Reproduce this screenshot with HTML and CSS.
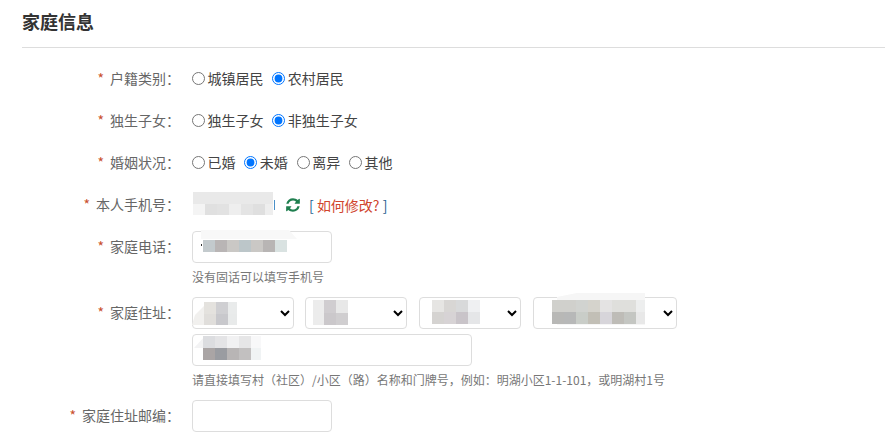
FILE: index.html
```html
<!DOCTYPE html>
<html lang="zh-CN">
<head>
<meta charset="utf-8">
<title>家庭信息</title>
<link rel="stylesheet" href="styles.css">
</head>
<body>
<section class="section">
  <h2 class="section-title">家庭信息</h2>
  <form class="form">
    <div class="row">
      <div class="label"><span class="req">*</span>户籍类别：</div>
      <div class="radios">
        <label class="radio"><input type="radio" name="a">城镇居民</label>
        <label class="radio"><input type="radio" name="a" checked>农村居民</label>
      </div>
    </div>
    <div class="row">
      <div class="label"><span class="req">*</span>独生子女：</div>
      <div class="radios">
        <label class="radio"><input type="radio" name="b">独生子女</label>
        <label class="radio"><input type="radio" name="b" checked>非独生子女</label>
      </div>
    </div>
    <div class="row">
      <div class="label"><span class="req">*</span>婚姻状况：</div>
      <div class="radios">
        <label class="radio"><input type="radio" name="c">已婚</label>
        <label class="radio"><input type="radio" name="c" checked>未婚</label>
        <label class="radio"><input type="radio" name="c">离异</label>
        <label class="radio"><input type="radio" name="c">其他</label>
      </div>
    </div>
    <div class="row">
      <div class="label"><span class="req">*</span>本人手机号：</div>
      <div class="phone">
        <div class="phone-value">
          <svg class="mosaic" aria-hidden="true">
            <rect x="1" y="-5" width="80" height="12" fill="#e9e9e9"/>
            <rect x="1" y="7" width="12" height="11" fill="#f4f4f4"/>
            <rect x="13" y="7" width="12" height="11" fill="#e0e0e0"/>
            <rect x="25" y="7" width="12" height="11" fill="#e2e2e2"/>
            <rect x="37" y="7" width="12" height="11" fill="#eeeeee"/>
            <rect x="49" y="7" width="12" height="11" fill="#e4e4e4"/>
            <rect x="61" y="7" width="12" height="11" fill="#dfdfdf"/>
            <rect x="73" y="7" width="8" height="11" fill="#eeeeee"/>
            <rect x="82" y="3" width="1" height="10" fill="#4a90c8"/>
          </svg>
        </div>
        <svg class="refresh" viewBox="0 0 1792 1792" aria-hidden="true"><path d="M1639 1056q0 5-1 7-64 268-268 434.500t-478 166.500q-146 0-282.500-55t-243.500-157l-129 129q-19 19-45 19t-45-19-19-45v-448q0-26 19-45t45-19h448q26 0 45 19t19 45-19 45l-137 137q71 66 161 102t187 36q134 0 250-65t186-179q11-17 53-117 8-23 30-23h192q13 0 22.500 9.500t9.500 22.500zm25-800v448q0 26-19 45t-45 19h-448q-26 0-45-19t-19-45 19-45l138-138q-148-137-349-137-134 0-250 65t-186 179q-11 17-53 117-8 23-30 23h-199q-13 0-22.500-9.500t-9.500-22.500v-7q65-268 270-434.500t480-166.500q146 0 284 55.500t245 156.500l130-129q19-19 45-19t45 19 19 45z"/></svg>
        <span class="how">[ <a class="how-link">如何修改?</a> ]</span>
      </div>
    </div>
    <div class="row">
      <div class="label"><span class="req">*</span>家庭电话：</div>
      <div class="field">
        <div class="overlay-wrap short">
          <input class="input" type="text">
          <svg class="mosaic" aria-hidden="true">
            <path d="M9 -1h88l8 9h-96z" fill="#f8f8f8"/>
            <rect x="11" y="9" width="12" height="12" fill="#c3cacd"/>
            <rect x="23" y="9" width="12" height="12" fill="#b9b5b5"/>
            <rect x="35" y="9" width="12" height="12" fill="#cac8c5"/>
            <rect x="47" y="9" width="12" height="12" fill="#bcc6c9"/>
            <rect x="59" y="9" width="12" height="12" fill="#cac8c5"/>
            <rect x="71" y="9" width="12" height="12" fill="#b8b5b4"/>
            <rect x="83" y="9" width="12" height="12" fill="#d9e2e1"/>
            <rect x="9" y="13" width="1" height="2" fill="#333333"/>
          </svg>
        </div>
        <p class="hint">没有固话可以填写手机号</p>
      </div>
    </div>
    <div class="row">
      <div class="label"><span class="req">*</span>家庭住址：</div>
      <div class="field">
        <div class="selects">
          <div class="overlay-wrap sel-a">
            <select class="select"><option></option></select>
            <svg class="mosaic" aria-hidden="true">
              <path d="M3 18l13-13h8v23h-24z" fill="#f1f0ee"/>
              <rect x="12" y="5" width="12" height="12" fill="#e4e2de"/>
              <rect x="24" y="5" width="12" height="12" fill="#cfcfd2"/>
              <rect x="36" y="5" width="9" height="12" fill="#e9ebeb"/>
              <rect x="12" y="17" width="12" height="11" fill="#e0dedb"/>
              <rect x="24" y="17" width="12" height="11" fill="#c8c8cc"/>
              <rect x="36" y="17" width="9" height="11" fill="#e8eaea"/>
            </svg>
          </div>
          <div class="overlay-wrap sel-a">
            <select class="select"><option></option></select>
            <svg class="mosaic" aria-hidden="true">
              <rect x="8" y="3" width="11" height="25" fill="#ececec"/>
              <rect x="19" y="3" width="12" height="13" fill="#d0cdd0"/>
              <rect x="31" y="3" width="12" height="13" fill="#e8e8e8"/>
              <rect x="19" y="16" width="12" height="12" fill="#cbc8cb"/>
              <rect x="31" y="16" width="12" height="12" fill="#d0ced0"/>
            </svg>
          </div>
          <div class="overlay-wrap sel-a sel-c">
            <select class="select"><option></option></select>
            <svg class="mosaic" aria-hidden="true">
              <rect x="13" y="3" width="12" height="12" fill="#e6e5e3"/>
              <rect x="25" y="3" width="12" height="12" fill="#d8d6d4"/>
              <rect x="37" y="3" width="12" height="12" fill="#d8d9da"/>
              <rect x="49" y="3" width="12" height="12" fill="#eff0f2"/>
              <rect x="13" y="15" width="12" height="12" fill="#d5d3d1"/>
              <rect x="25" y="15" width="12" height="12" fill="#d7d3d5"/>
              <rect x="37" y="15" width="12" height="12" fill="#c9c4c9"/>
              <rect x="49" y="15" width="12" height="12" fill="#e5e6e8"/>
            </svg>
          </div>
          <div class="overlay-wrap sel-d">
            <select class="select"><option></option></select>
            <svg class="mosaic" aria-hidden="true">
              <path d="M24 0l20-4h68v32h-88z" fill="#f6f6f6"/>
              <rect x="19" y="3" width="12" height="12" fill="#d0d0cc"/>
              <rect x="31" y="3" width="12" height="12" fill="#d0d0cc"/>
              <rect x="43" y="3" width="12" height="12" fill="#d1d3d0"/>
              <rect x="55" y="3" width="12" height="12" fill="#d5d3cc"/>
              <rect x="67" y="3" width="12" height="12" fill="#e4e3e3"/>
              <rect x="79" y="3" width="12" height="12" fill="#dfdfdc"/>
              <rect x="91" y="3" width="12" height="12" fill="#dfdfdc"/>
              <rect x="103" y="3" width="9" height="12" fill="#edeeee"/>
              <rect x="19" y="15" width="12" height="12" fill="#b8b8b6"/>
              <rect x="31" y="15" width="12" height="12" fill="#b7b8b8"/>
              <rect x="43" y="15" width="12" height="12" fill="#c9cdc8"/>
              <rect x="55" y="15" width="12" height="12" fill="#c2bfb6"/>
              <rect x="67" y="15" width="12" height="12" fill="#d7d5da"/>
              <rect x="79" y="15" width="12" height="12" fill="#bebcb7"/>
              <rect x="91" y="15" width="12" height="12" fill="#c4c6c2"/>
              <rect x="103" y="15" width="9" height="12" fill="#e8e8e8"/>
            </svg>
          </div>
        </div>
        <div class="overlay-wrap long">
          <input class="input" type="text">
          <svg class="mosaic" aria-hidden="true">
            <path d="M2 14l11-12h56v12z" fill="#f3f3f4"/>
            <rect x="11" y="2" width="12" height="12" fill="#dcdde0"/>
            <rect x="23" y="2" width="12" height="12" fill="#e4e4e6"/>
            <rect x="35" y="2" width="12" height="12" fill="#f1f1f2"/>
            <rect x="47" y="2" width="12" height="12" fill="#e6e6e7"/>
            <rect x="59" y="2" width="10" height="12" fill="#f8f8f9"/>
            <rect x="11" y="14" width="12" height="12" fill="#aaa5a5"/>
            <rect x="23" y="14" width="12" height="12" fill="#9a9ca1"/>
            <rect x="35" y="14" width="12" height="12" fill="#b8b5b5"/>
            <rect x="47" y="14" width="12" height="12" fill="#c2c0c0"/>
            <rect x="59" y="14" width="10" height="12" fill="#f0f3f4"/>
          </svg>
        </div>
        <p class="hint">请直接填写村（社区）/小区（路）名称和门牌号，例如：明湖小区1-1-101，或明湖村1号</p>
      </div>
    </div>
    <div class="row">
      <div class="label"><span class="req">*</span>家庭住址邮编：</div>
      <div class="field">
        <div class="overlay-wrap short"><input class="input" type="text"></div>
      </div>
    </div>
  </form>
</section>
</body>
</html>
```
FILE: styles.css
```css
* { box-sizing: border-box; }
html, body { height: 100%; }
body {
  margin: 0;
  overflow: hidden;
  background: #fff;
  color: #555;
  font-family: "Noto Sans CJK SC", "Liberation Sans", sans-serif;
  font-size: 14px;
}
.section { margin-left: 22px; }
.section-title {
  margin: 0;
  height: 48px;
  padding-top: 7px;
  border-bottom: 1px solid #ddd;
  color: #333;
  font-size: 18px;
  font-weight: 700;
  line-height: 28px;
}
.form { display: flex; flex-direction: column; gap: 10px; padding-top: 15px; }
.row { display: grid; grid-template-columns: 158px 1fr; column-gap: 12px; align-items: start; }
.label { height: 32px; line-height: 30px; text-align: right; color: #666; white-space: nowrap; }
.req { margin-right: 6px; color: #c9502c; }
.radios { display: flex; align-items: center; gap: 9px; height: 32px; padding-bottom: 3px; color: #444; line-height: 20px; }
.radio { display: flex; align-items: center; gap: 2.4px; }
.radio input { width: 13px; height: 13px; margin: 1px 0 0; }
.phone { display: flex; align-items: center; height: 32px; }
.phone-value { position: relative; width: 93px; height: 16px; }
.refresh { width: 16px; height: 16px; fill: #1f7f4f; margin: -1px 8px 0 0; }
.how { color: #1f5f8f; line-height: 20px; margin-top: -1px; }
.how-link { color: #d0452d; }
.field { display: flex; flex-direction: column; gap: 5px; }
.selects { display: flex; gap: 11px; }
.overlay-wrap { position: relative; height: 32px; }
.short { width: 140px; }
.long { width: 280px; }
.sel-a { width: 102px; }
.sel-c { margin-left: 1px; }
.sel-d { width: 144px; margin-left: 1px; }
.input, .select {
  display: block;
  width: 100%;
  height: 32px;
  border: 1px solid #ddd;
  border-radius: 4px;
  background-color: #fff;
  font: inherit;
}
.mosaic { position: absolute; left: 0; top: 0; width: 100%; height: 100%; overflow: visible; pointer-events: none; }
.hint { margin: 0; height: 19px; line-height: 18px; font-size: 12px; color: #777; }
```
